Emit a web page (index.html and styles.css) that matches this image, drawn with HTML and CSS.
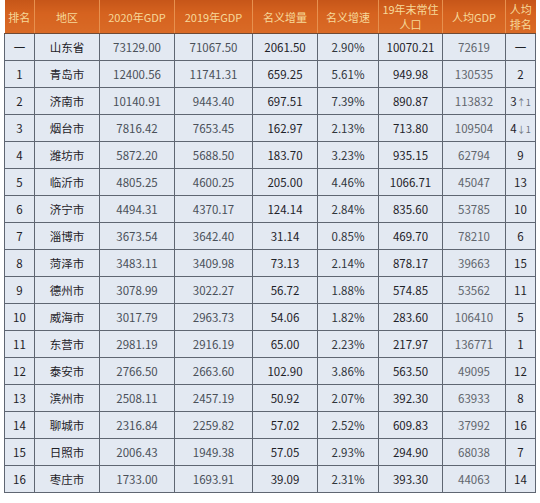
FILE: index.html
```html
<!DOCTYPE html>
<html lang="zh">
<head>
<meta charset="utf-8">
<link rel="stylesheet" href="styles.css">
</head>
<body>
<div class="wrap">
<table class="gdp">
<colgroup>
<col class="c1"><col class="c2"><col class="c3"><col class="c4"><col class="c5"><col class="c6"><col class="c7"><col class="c8"><col class="c9">
</colgroup>
<thead>
<tr><th>排名</th><th>地区</th><th>2020年GDP</th><th>2019年GDP</th><th>名义增量</th><th>名义增速</th><th><span class="hl">19年末常住</span><span class="hl">人口</span></th><th>人均GDP</th><th><span class="hl">人均</span><span class="hl">排名</span></th></tr>
</thead>
<tbody>
<tr><td>一</td><td>山东省</td><td class="g">73129.00</td><td class="g">71067.50</td><td>2061.50</td><td class="m">2.90%</td><td>10070.21</td><td class="l">72619</td><td>一</td></tr>
<tr><td>1</td><td>青岛市</td><td class="g">12400.56</td><td class="g">11741.31</td><td>659.25</td><td class="m">5.61%</td><td>949.98</td><td class="l">130535</td><td>2</td></tr>
<tr><td>2</td><td>济南市</td><td class="g">10140.91</td><td class="g">9443.40</td><td>697.51</td><td class="m">7.39%</td><td>890.87</td><td class="l">113832</td><td>3<span class="ar">↑1</span></td></tr>
<tr><td>3</td><td>烟台市</td><td class="g">7816.42</td><td class="g">7653.45</td><td>162.97</td><td class="m">2.13%</td><td>713.80</td><td class="l">109504</td><td>4<span class="ar">↓1</span></td></tr>
<tr><td>4</td><td>潍坊市</td><td class="g">5872.20</td><td class="g">5688.50</td><td>183.70</td><td class="m">3.23%</td><td>935.15</td><td class="l">62794</td><td>9</td></tr>
<tr><td>5</td><td>临沂市</td><td class="g">4805.25</td><td class="g">4600.25</td><td>205.00</td><td class="m">4.46%</td><td>1066.71</td><td class="l">45047</td><td>13</td></tr>
<tr><td>6</td><td>济宁市</td><td class="g">4494.31</td><td class="g">4370.17</td><td>124.14</td><td class="m">2.84%</td><td>835.60</td><td class="l">53785</td><td>10</td></tr>
<tr><td>7</td><td>淄博市</td><td class="g">3673.54</td><td class="g">3642.40</td><td>31.14</td><td class="m">0.85%</td><td>469.70</td><td class="l">78210</td><td>6</td></tr>
<tr><td>8</td><td>菏泽市</td><td class="g">3483.11</td><td class="g">3409.98</td><td>73.13</td><td class="m">2.14%</td><td>878.17</td><td class="l">39663</td><td>15</td></tr>
<tr><td>9</td><td>德州市</td><td class="g">3078.99</td><td class="g">3022.27</td><td>56.72</td><td class="m">1.88%</td><td>574.85</td><td class="l">53562</td><td>11</td></tr>
<tr><td>10</td><td>威海市</td><td class="g">3017.79</td><td class="g">2963.73</td><td>54.06</td><td class="m">1.82%</td><td>283.60</td><td class="l">106410</td><td>5</td></tr>
<tr><td>11</td><td>东营市</td><td class="g">2981.19</td><td class="g">2916.19</td><td>65.00</td><td class="m">2.23%</td><td>217.97</td><td class="l">136771</td><td>1</td></tr>
<tr><td>12</td><td>泰安市</td><td class="g">2766.50</td><td class="g">2663.60</td><td>102.90</td><td class="m">3.86%</td><td>563.50</td><td class="l">49095</td><td>12</td></tr>
<tr><td>13</td><td>滨州市</td><td class="g">2508.11</td><td class="g">2457.19</td><td>50.92</td><td class="m">2.07%</td><td>392.30</td><td class="l">63933</td><td>8</td></tr>
<tr><td>14</td><td>聊城市</td><td class="g">2316.84</td><td class="g">2259.82</td><td>57.02</td><td class="m">2.52%</td><td>609.83</td><td class="l">37992</td><td>16</td></tr>
<tr><td>15</td><td>日照市</td><td class="g">2006.43</td><td class="g">1949.38</td><td>57.05</td><td class="m">2.93%</td><td>294.90</td><td class="l">68038</td><td>7</td></tr>
<tr><td>16</td><td>枣庄市</td><td class="g">1733.00</td><td class="g">1693.91</td><td>39.09</td><td class="m">2.31%</td><td>393.30</td><td class="l">44063</td><td>14</td></tr>
</tbody>
</table>
</div>
</body>
</html>
```

FILE: styles.css
```css
html, body {
  margin: 0;
  padding: 0;
  background: #ffffff;
}
.wrap {
  padding: 0 0 0 4px;
}
.gdp {
  border-collapse: collapse;
  table-layout: fixed;
  width: 531px;
  font-family: "Noto Sans CJK SC", "Noto Sans", sans-serif;
  font-size: 11.5px;
  color: #1e2228;
}
.c1 { width: 30px; }
.c2 { width: 65px; }
.c3 { width: 75px; }
.c4 { width: 78px; }
.c5 { width: 65px; }
.c6 { width: 61px; }
.c7 { width: 64px; }
.c8 { width: 63px; }
.c9 { width: 30px; }
.gdp th {
  height: 33px;
  padding: 0;
  background: linear-gradient(#c65618, #d5621f 40%, #d96a26);
  color: #f6d99a;
  font-weight: normal;
  font-size: 11px;
  line-height: 14px;
  border-left: 1px solid #e7914f;
  border-right: 1px solid #e7914f;
  border-bottom: 1px solid #6e4a36;
  text-align: center;
}
.hl {
  display: block;
  line-height: 15px;
}
.gdp th:first-child { border-left: none; }
.gdp th:last-child { border-right: none; }
.gdp td {
  height: 26px;
  padding: 0;
  text-align: center;
  background: #e3e9f2;
  border: 1px solid #5f6672;
  white-space: nowrap;
}
.gdp td.g { color: #4a5059; }
.gdp td.m { color: #30353c; }
.gdp td.l { color: #60656c; }
.ar {
  font-size: 9px;
  color: #6a6f78;
}
```
